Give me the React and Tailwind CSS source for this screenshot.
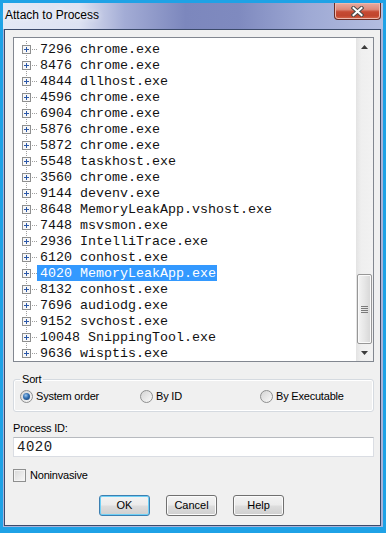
// Attach to Process dialog (Windows 7 look)
const processes = [
  ['7296', 'chrome.exe'],
  ['8476', 'chrome.exe'],
  ['4844', 'dllhost.exe'],
  ['4596', 'chrome.exe'],
  ['6904', 'chrome.exe'],
  ['5876', 'chrome.exe'],
  ['5872', 'chrome.exe'],
  ['5548', 'taskhost.exe'],
  ['3560', 'chrome.exe'],
  ['9144', 'devenv.exe'],
  ['8648', 'MemoryLeakApp.vshost.exe'],
  ['7448', 'msvsmon.exe'],
  ['2936', 'IntelliTrace.exe'],
  ['6120', 'conhost.exe'],
  ['4020', 'MemoryLeakApp.exe'],
  ['8132', 'conhost.exe'],
  ['7696', 'audiodg.exe'],
  ['9152', 'svchost.exe'],
  ['10048', 'SnippingTool.exe'],
  ['9636', 'wisptis.exe'],
];

const SELECTED = '4020';

function TreeGlyph({ last }) {
  return (
    <svg width="23" height="16" className="shrink-0" shapeRendering="crispEdges">
      <line x1="12.5" y1="0" x2="12.5" y2="4" stroke="#a0a0a0" strokeDasharray="1 1" />
      {!last && <line x1="12.5" y1="14" x2="12.5" y2="16" stroke="#a0a0a0" strokeDasharray="1 1" />}
      <line x1="18" y1="8.5" x2="23" y2="8.5" stroke="#a0a0a0" strokeDasharray="1 1" />
      <rect x="8.5" y="4.5" width="8" height="8" fill="#f7f7f7" stroke="#8e8f8f" />
      <line x1="10" y1="8.5" x2="15" y2="8.5" stroke="#2b58a8" />
      <line x1="12.5" y1="6" x2="12.5" y2="11" stroke="#2b58a8" />
    </svg>
  );
}

function ScrollArrow({ down }) {
  return (
    <div className="h-[17px] flex items-center justify-center">
      <svg width="7" height="4">
        {down ? (
          <polygon points="0,0 7,0 3.5,4" fill="#3c3c3c" />
        ) : (
          <polygon points="0,4 7,4 3.5,0" fill="#3c3c3c" />
        )}
      </svg>
    </div>
  );
}

function Radio({ checked }) {
  return (
    <span className="w-[13px] h-[13px] shrink-0 rounded-full border border-[#8e8f8f] bg-[linear-gradient(135deg,#d4d4d4,#f9f9f9)] flex items-center justify-center">
      {checked && (
        <span className="w-[7px] h-[7px] rounded-full bg-[radial-gradient(circle_at_40%_35%,#9cc6ee_0%,#2f6db0_45%,#1a3c68_100%)]" />
      )}
    </span>
  );
}

function DlgButton({ label, primary }) {
  return (
    <button
      type="button"
      className={`w-[51px] h-[21px] rounded-[3px] border text-[11px] leading-none text-black bg-[linear-gradient(#f3f3f3_0%,#ebebeb_48%,#dddddd_52%,#cfcfcf_100%)] ${
        primary
          ? 'border-[#3c7fb1] shadow-[inset_0_0_0_1px_#6fd0f6]'
          : 'border-[#707070] shadow-[inset_0_0_0_1px_#fbfbfb]'
      }`}
    >
      {label}
    </button>
  );
}

export default function App() {
  return (
    <div
      className="w-[386px] h-[533px] bg-[#1fa2e6] pt-[3px] px-[3px] pb-[6px] flex flex-col text-black"
      style={{ fontFamily: '"Liberation Sans", Arial, sans-serif' }}
    >
      <div className="flex-1 flex flex-col bg-[#a9b4da] pl-[1px] pr-[2px] pb-[1px]">
        {/* title bar */}
        <div className="h-[26px] -ml-[1px] -mr-[2px] flex items-start bg-[linear-gradient(90deg,#e4e8f5_0%,#dde2f2_20%,#a3acd5_32%,#7c87bd_48%,#7f8abf_62%,#9ea9d4_80%,#b3bde0_100%)]">
          <span className="pl-[2px] pt-[5px] text-[12px] leading-[14px] [text-shadow:0_0_6px_#ffffff]">
            Attach to Process
          </span>
          <div className="ml-auto mr-[2px] w-[47px] h-[17px] rounded-b-[4px] border border-t-0 border-[#6a2d25] bg-[linear-gradient(#e7aba1_0%,#dc8a7b_40%,#c64a33_55%,#c0442d_80%,#d86a4f_100%)] shadow-[inset_0_0_0_1px_#efb8ad] flex items-center justify-center">
            <svg width="13" height="11" viewBox="0 0 13 11">
              <path d="M2.5 2 L10.5 9 M10.5 2 L2.5 9" stroke="#4a4a4a" strokeWidth="4" strokeLinecap="square" />
              <path d="M2.5 2 L10.5 9 M10.5 2 L2.5 9" stroke="#ffffff" strokeWidth="2" strokeLinecap="square" />
            </svg>
          </div>
        </div>

        {/* client area */}
        <div className="flex-1 border border-[#3b4a6b] bg-[#f0f0f0] pt-[7px] pl-[8px] pr-[6px] flex flex-col">
          {/* process tree */}
          <div className="h-[325px] border border-[#828790] bg-white flex">
            <div className="flex-1 pt-[3px]">
              {processes.map(([pid, name], i) => {
                const sel = pid === SELECTED;
                return (
                  <div key={pid} className="h-[16px] flex items-center">
                    <TreeGlyph last={i === processes.length - 1} />
                    <span
                      className={`h-[16px] pl-[3px] pr-[1px] text-[13.33px] leading-[17px] whitespace-pre text-[#111] ${
                        sel ? 'bg-[#3399ff] text-white' : ''
                      }`}
                      style={{ fontFamily: '"Liberation Mono", "Courier New", monospace' }}
                    >
                      {pid} {name}
                    </span>
                  </div>
                );
              })}
            </div>
            <div className="w-[17px] flex flex-col bg-[linear-gradient(90deg,#e3e3e3,#efefef_30%,#f2f2f2)]">
              <ScrollArrow />
              <div className="flex-1" />
              <div className="ml-[1px] w-[15px] h-[70px] rounded-[2px] border border-[#979797] bg-[linear-gradient(90deg,#f4f4f4,#e6e6e6_50%,#d6d6d6)] shadow-[inset_0_0_0_1px_#fafafa] flex flex-col items-center justify-center gap-[1px]">
                <span className="w-[7px] h-[1px] bg-[#7a7a7a]" />
                <span className="w-[7px] h-[1px] bg-[#7a7a7a]" />
                <span className="w-[7px] h-[1px] bg-[#7a7a7a]" />
                <span className="w-[7px] h-[1px] bg-[#7a7a7a]" />
              </div>
              <ScrollArrow down />
            </div>
          </div>

          {/* sort group */}
          <fieldset className="mt-[10px] border border-[#d5dae0] rounded-[3px] pl-[6px] pb-[8px] shadow-[inset_0_0_0_1px_#ffffff]">
            <legend className="px-[2px] text-[11px] leading-[14px] tracking-[-0.2px]">Sort</legend>
            <div className="mt-[3px] h-[14px] flex items-center text-[11px] tracking-[-0.2px]">
              <label className="w-[120px] flex items-center gap-[3px]">
                <Radio checked />
                <span>System order</span>
              </label>
              <label className="w-[120px] flex items-center gap-[3px]">
                <Radio />
                <span>By ID</span>
              </label>
              <label className="flex items-center gap-[3px]">
                <Radio />
                <span>By Executable</span>
              </label>
            </div>
          </fieldset>

          {/* process id */}
          <div className="mt-[9px] text-[11px] leading-[14px] tracking-[-0.2px]">Process ID:</div>
          <div className="mt-[2px] h-[20px] border border-[#dadde3] border-t-[#b7babf] bg-white flex items-center pl-[3px]">
            <span
              className="text-[14px] leading-none tracking-[0.5px] text-[#202020]"
              style={{ fontFamily: '"Liberation Mono", "Courier New", monospace' }}
            >
              4020
            </span>
          </div>

          {/* noninvasive */}
          <label className="mt-[12px] h-[13px] flex items-center gap-[4px] text-[11px] tracking-[-0.2px]">
            <span className="w-[13px] h-[13px] border border-[#8e8f8f] bg-[linear-gradient(135deg,#d8d8d8,#f8f8f8)] shadow-[inset_0_0_0_1px_#f4f4f4]" />
            <span>Noninvasive</span>
          </label>

          {/* buttons */}
          <div className="mt-[13px] pl-[86px] flex gap-[16px]">
            <DlgButton label="OK" primary />
            <DlgButton label="Cancel" />
            <DlgButton label="Help" />
          </div>
        </div>
      </div>
    </div>
  );
}
